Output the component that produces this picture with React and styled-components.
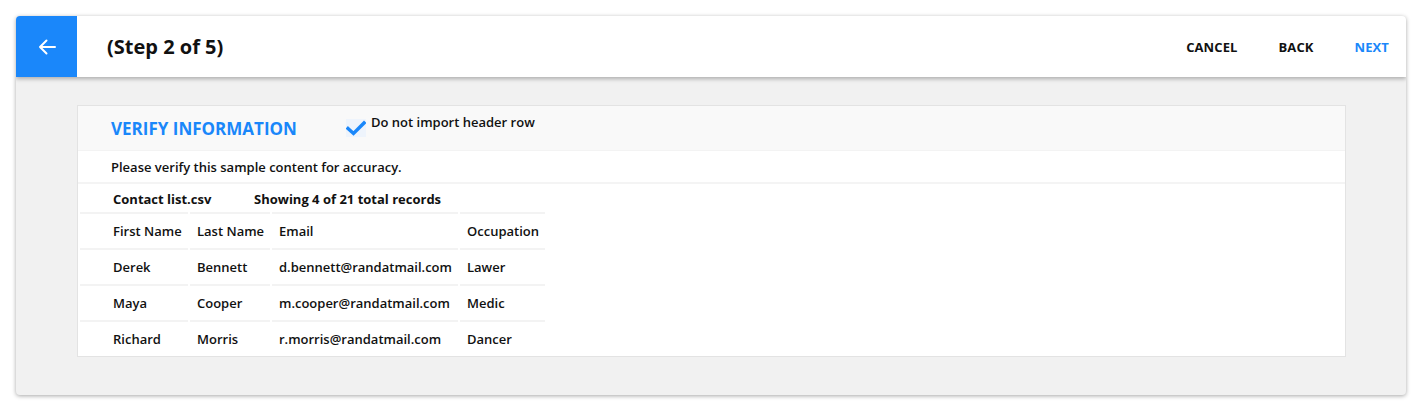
import React from "react";
import styled, { createGlobalStyle } from "styled-components";

const Global = createGlobalStyle`
  html, body { margin: 0; padding: 0; background: #ffffff; }
  body { font-family: "Open Sans", "Noto Sans", sans-serif; color: #111; }
  * { box-sizing: border-box; }
`;

const Page = styled.div`
  padding: 16px;
  width: 1422px;
  height: 411px;
`;

const Window = styled.div`
  width: 1390px;
  height: 379px;
  border-radius: 4px;
  overflow: hidden;
  background: #f1f1f1;
  box-shadow: 0 1px 4px rgba(0, 0, 0, 0.35);
  display: flex;
  flex-direction: column;
`;

const TopBar = styled.header`
  position: relative;
  z-index: 1;
  height: 61px;
  flex: none;
  display: flex;
  align-items: center;
  background: #fff;
  box-shadow: 0 2px 4px rgba(0, 0, 0, 0.28);
`;

const BackSquare = styled.button`
  width: 61px;
  height: 61px;
  border: 0;
  padding: 0;
  background: #1a87fa;
  display: flex;
  align-items: center;
  justify-content: center;
  cursor: pointer;
`;

const Title = styled.h1`
  margin: 0 0 0 30px;
  font-size: 20px;
  font-weight: 700;
  color: #111;
  flex: 1;
`;

const Actions = styled.nav`
  display: flex;
  gap: 41px;
  padding-right: 17px;
`;

const Action = styled.button`
  border: 0;
  background: none;
  padding: 0;
  font-family: inherit;
  font-size: 13px;
  font-weight: 700;
  letter-spacing: 0.1px;
  color: ${(p) => (p.$primary ? "#1a87fa" : "#111")};
  cursor: pointer;
`;

const Body = styled.main`
  flex: 1;
  padding: 28px 60px 39px 61px;
`;

const Card = styled.section`
  background: #fff;
  border: 1px solid #e3e3e3;
  height: 100%;
`;

const CardHead = styled.div`
  height: 45px;
  background: #f9f9f9;
  display: flex;
  align-items: center;
  padding-left: 33px;
  border-bottom: 1px solid #f3f3f3;
`;

const SectionTitle = styled.h2`
  margin: 0;
  font-size: 17px;
  font-weight: 700;
  color: #1a87fa;
  width: 235px;
  padding-top: 1px;
`;

const CheckLabel = styled.label`
  display: flex;
  align-items: flex-start;
  gap: 5px;
  font-size: 13px;
  font-weight: 600;
  color: #111;
  margin-top: -6px;
`;

const CheckBox = styled.span`
  width: 20px;
  height: 18px;
  margin-top: 6px;
  background: #eef4fc;
  display: flex;
  align-items: center;
  justify-content: center;
`;

const Note = styled.p`
  margin: 0;
  height: 33px;
  display: flex;
  align-items: center;
  padding: 1px 0 0 33px;
  font-size: 13px;
  font-weight: 600;
  border-bottom: 2px solid #f4f4f4;
`;

const Table = styled.table`
  border-collapse: separate;
  border-spacing: 2px 0;
  table-layout: fixed;
  width: 469px;
  font-size: 13px;
  margin-left: 0;
`;

const Caption = styled.caption`
  text-align: left;
  height: 28px;
  padding: 1px 0 0 35px;
  font-weight: 700;
  line-height: 28px;
  white-space: nowrap;
`;

const CaptionPart = styled.span`
  display: inline-block;
  width: ${(p) => p.$w || "auto"};
`;

const Cell = styled.td`
  height: 36px;
  padding: 0 0 0 7px;
  font-weight: 600;
  white-space: nowrap;
  border-top: 2px solid #f3f3f3;
  &:first-child { padding-left: 33px; }
`;

const HeadCell = styled(Cell).attrs({ as: "th" })`
  text-align: left;
`;

const rows = [
  ["Derek", "Bennett", "d.bennett@randatmail.com", "Lawer"],
  ["Maya", "Cooper", "m.cooper@randatmail.com", "Medic"],
  ["Richard", "Morris", "r.morris@randatmail.com", "Dancer"],
];

const colWidths = [108, 80, 186, 85];

export default function App() {
  return (
    <Page>
      <Global />
      <Window>
        <TopBar>
          <BackSquare aria-label="Back">
            <svg width="18" height="16" viewBox="0 0 18 16" fill="none">
              <path d="M17 8H2M8.5 1.5L2 8l6.5 6.5" stroke="#fff" strokeWidth="2" strokeLinecap="round" strokeLinejoin="round" />
            </svg>
          </BackSquare>
          <Title>(Step 2 of 5)</Title>
          <Actions>
            <Action>CANCEL</Action>
            <Action>BACK</Action>
            <Action $primary>NEXT</Action>
          </Actions>
        </TopBar>
        <Body>
          <Card>
            <CardHead>
              <SectionTitle>VERIFY INFORMATION</SectionTitle>
              <CheckLabel>
                <CheckBox>
                  <svg width="20" height="16" viewBox="0 0 20 16">
                    <path d="M2 8.5l5.5 5L18 3" stroke="#1a87fa" strokeWidth="3.4" fill="none" strokeLinecap="square" strokeLinejoin="miter" />
                  </svg>
                </CheckBox>
                Do not import header row
              </CheckLabel>
            </CardHead>
            <Note>Please verify this sample content for accuracy.</Note>
            <Table>
              <Caption>
                <CaptionPart $w="141px">Contact list.csv</CaptionPart>
                <CaptionPart>Showing 4 of 21 total records</CaptionPart>
              </Caption>
              <colgroup>
                {colWidths.map((w, i) => (
                  <col key={i} style={{ width: w }} />
                ))}
              </colgroup>
              <thead>
                <tr>
                  <HeadCell>First Name</HeadCell>
                  <HeadCell>Last Name</HeadCell>
                  <HeadCell>Email</HeadCell>
                  <HeadCell>Occupation</HeadCell>
                </tr>
              </thead>
              <tbody>
                {rows.map((r) => (
                  <tr key={r[2]}>
                    {r.map((c) => (
                      <Cell key={c}>{c}</Cell>
                    ))}
                  </tr>
                ))}
              </tbody>
            </Table>
          </Card>
        </Body>
      </Window>
    </Page>
  );
}
